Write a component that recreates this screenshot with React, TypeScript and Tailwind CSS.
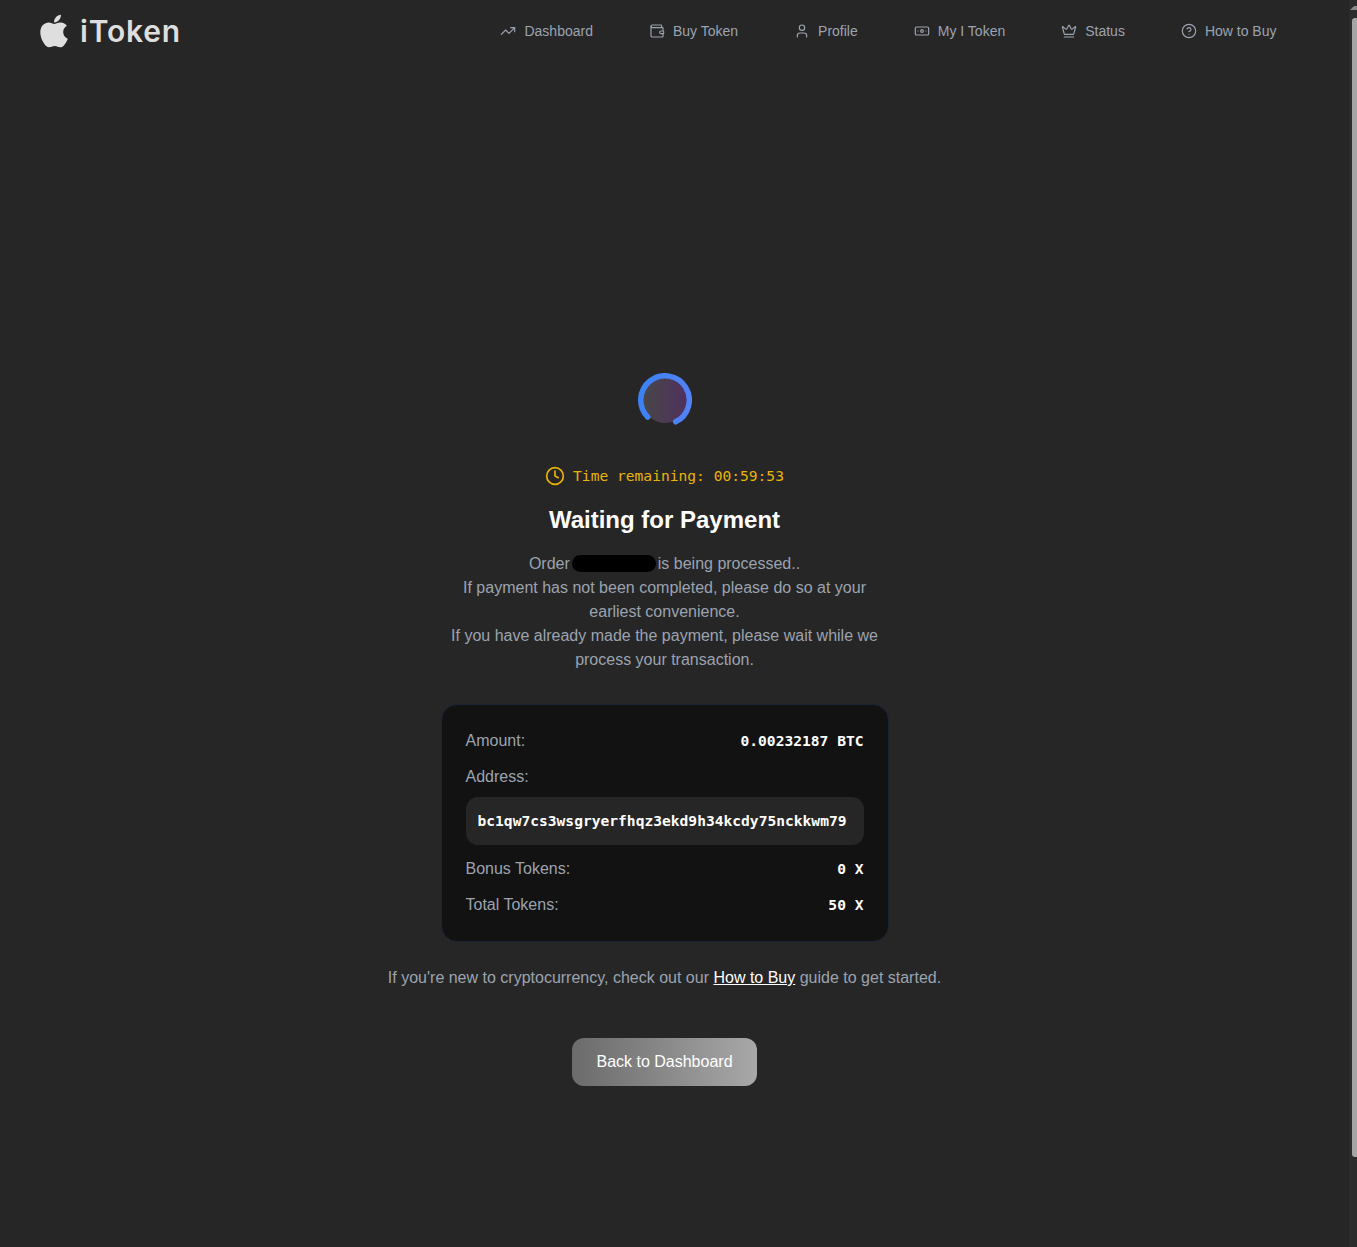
import { TrendingUp, Wallet, User, Banknote, Crown, CircleHelp, Clock } from "lucide-react";
import { FaApple } from "react-icons/fa";

const nav = [
  { label: "Dashboard", Icon: TrendingUp },
  { label: "Buy Token", Icon: Wallet },
  { label: "Profile", Icon: User },
  { label: "My I Token", Icon: Banknote },
  { label: "Status", Icon: Crown },
  { label: "How to Buy", Icon: CircleHelp },
];

function Spinner() {
  return (
    <svg width="54" height="54" viewBox="0 0 54 54" className="block">
      <defs>
        <linearGradient id="fill" x1="0" y1="0" x2="1" y2="0">
          <stop offset="0" stopColor="#474747" />
          <stop offset="1" stopColor="#50305f" />
        </linearGradient>
        <linearGradient id="ring" x1="0" y1="0" x2="1" y2="0">
          <stop offset="0" stopColor="#3b82f6" />
          <stop offset="1" stopColor="#5282f4" />
        </linearGradient>
      </defs>
      <circle cx="27" cy="27" r="23" fill="url(#fill)" />
      <path d="M 9.7 44 A 24.25 24.25 0 1 1 37.7 48.8" fill="none" stroke="url(#ring)" strokeWidth="5.5" strokeLinecap="round" />
    </svg>
  );
}

function Row({ label, value }: { label: string; value: string }) {
  return (
    <div className="flex items-center justify-between h-6">
      <span className="text-[#9ca3af]">{label}</span>
      <span className="font-['DejaVu_Sans_Mono',monospace] font-bold text-[14.6px] text-white">{value}</span>
    </div>
  );
}

export default function App() {
  return (
    <div className="relative w-full h-[1247px] overflow-hidden bg-[#262626] font-['Liberation_Sans',Arial,sans-serif] text-base leading-6">
      <div className="w-[1329px]">
        <header className="flex items-center justify-between h-[62px] pl-10 pr-[52.5px]">
          <div className="flex items-center gap-3 text-[#dedede]">
            <FaApple className="w-[28px] h-[38px]" />
            <span className="font-['Inter',sans-serif] font-semibold text-[30px] leading-9 tracking-[0.8px]">iToken</span>
          </div>
          <nav className="flex items-center gap-14 text-sm text-[#9ca3af]">
            {nav.map(({ label, Icon }) => (
              <a key={label} className="flex items-center gap-2">
                <Icon className="w-4 h-4" strokeWidth={1.75} />
                {label}
              </a>
            ))}
          </nav>
        </header>

        <main className="flex flex-col items-center pt-[311px]">
          <Spinner />
          <div className="flex items-center gap-2 mt-[37px] h-6 text-[#eab308]">
            <Clock className="w-5 h-5" strokeWidth={2} />
            <span className="font-['DejaVu_Sans_Mono',monospace] text-[14.6px]">Time remaining: 00:59:53</span>
          </div>
          <h1 className="mt-[16px] text-2xl leading-8 font-bold text-white">Waiting for Payment</h1>
          <p className="mt-[16px] w-[448px] text-center text-[#9ca3af]">
            Order<span className="inline-block align-[-3px] w-[84px] h-[17px] mx-[2px] rounded-full bg-black" />is being processed..
            <br />
            If payment has not been completed, please do so at your earliest convenience.
            <br />
            If you have already made the payment, please wait while we process your transaction.
          </p>

          <section className="mt-[32px] w-[448px] p-6 rounded-2xl bg-[#121212] border border-[#1b2436] flex flex-col gap-3">
            <Row label="Amount:" value="0.00232187 BTC" />
            <div className="flex flex-col gap-2">
              <div className="h-6 text-[#9ca3af]">Address:</div>
              <div className="h-12 px-3 flex items-center rounded-xl bg-[#262626] font-['DejaVu_Sans_Mono',monospace] font-bold text-[14.6px] text-white whitespace-nowrap">
                bc1qw7cs3wsgryerfhqz3ekd9h34kcdy75nckkwm79
              </div>
            </div>
            <Row label="Bonus Tokens:" value="0 X" />
            <Row label="Total Tokens:" value="50 X" />
          </section>

          <p className="mt-6 text-[#9ca3af]">
            If you're new to cryptocurrency, check out our <a className="text-white underline">How to Buy</a> guide to get started.
          </p>

          <button className="mt-12 h-12 px-6 rounded-xl text-white bg-gradient-to-r from-[#6b6b6b] to-[#a8a8a8]">
            Back to Dashboard
          </button>
        </main>
      </div>

      <div className="absolute top-0 right-0 bottom-0 w-2 bg-[#2c2c2c]">
        <svg width="8" height="12" viewBox="0 0 8 12" className="absolute top-1 left-0">
          <path d="M1 6 L5 2 L8 2 L8 6 Z" fill="#8a8a8a" />
        </svg>
        <div className="absolute top-[18px] left-[3px] right-0 h-[1139px] rounded-l-[3px] bg-[#a5a5a5]" />
      </div>
    </div>
  );
}
